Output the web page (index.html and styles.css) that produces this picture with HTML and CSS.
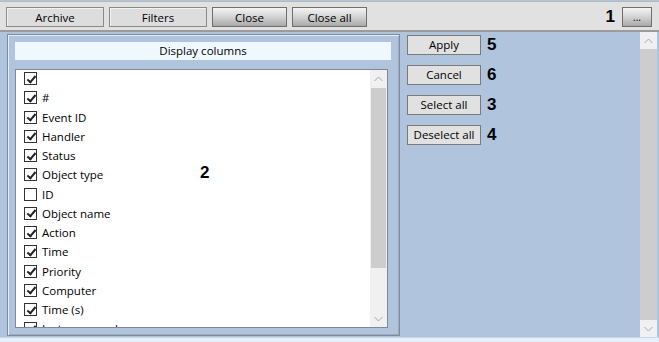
FILE: index.html
```html
<!DOCTYPE html>
<html>
<head>
<meta charset="utf-8">
<link rel="stylesheet" href="styles.css">
</head>
<body>
<div class="app">
  <div class="toolbar">
    <button class="tbtn flat w98">Archive</button>
    <button class="tbtn flat w98">Filters</button>
    <button class="tbtn grad w75">Close</button>
    <button class="tbtn grad w75">Close all</button>
    <span class="spacer"></span>
    <span class="num">1</span>
    <button class="tbtn grad dots">...</button>
  </div>
  <div class="main">
    <div class="content">
      <div class="panel">
        <div class="header">Display columns</div>
        <div class="listbox">
          <div class="items">
            <div class="item"><span class="cb on"></span><span class="lbl"></span></div>
            <div class="item"><span class="cb on"></span><span class="lbl">#</span></div>
            <div class="item"><span class="cb on"></span><span class="lbl">Event ID</span></div>
            <div class="item"><span class="cb on"></span><span class="lbl">Handler</span></div>
            <div class="item"><span class="cb on"></span><span class="lbl">Status</span></div>
            <div class="item"><span class="cb on"></span><span class="lbl">Object type</span></div>
            <div class="item"><span class="cb"></span><span class="lbl">ID</span></div>
            <div class="item"><span class="cb on"></span><span class="lbl">Object name</span></div>
            <div class="item"><span class="cb on"></span><span class="lbl">Action</span></div>
            <div class="item"><span class="cb on"></span><span class="lbl">Time</span></div>
            <div class="item"><span class="cb on"></span><span class="lbl">Priority</span></div>
            <div class="item"><span class="cb on"></span><span class="lbl">Computer</span></div>
            <div class="item"><span class="cb on"></span><span class="lbl">Time (s)</span></div>
            <div class="item"><span class="cb on"></span><span class="lbl">Instance number</span></div>
          </div>
          <div class="sbar">
            <div class="sarrow"><svg width="9" height="6" viewBox="0 0 9 6"><polyline points="0.5,5 4.5,1 8.5,5" fill="none" stroke="#a6a6a6" stroke-width="1"/></svg></div>
            <div class="sthumb"></div>
            <div class="sfill"></div>
            <div class="sarrow"><svg width="9" height="6" viewBox="0 0 9 6"><polyline points="0.5,1 4.5,5 8.5,1" fill="none" stroke="#a6a6a6" stroke-width="1"/></svg></div>
          </div>
          <span class="num label2">2</span>
        </div>
      </div>
      <div class="actions">
        <div class="arow"><button class="abtn">Apply</button><span class="num">5</span></div>
        <div class="arow"><button class="abtn">Cancel</button><span class="num">6</span></div>
        <div class="arow"><button class="abtn">Select all</button><span class="num">3</span></div>
        <div class="arow"><button class="abtn">Deselect all</button><span class="num">4</span></div>
      </div>
    </div>
    <div class="vscroll">
      <div class="sarrow top"><svg width="9" height="6" viewBox="0 0 9 6"><polyline points="0.5,5 4.5,1 8.5,5" fill="none" stroke="#a6a6a6" stroke-width="1"/></svg></div>
      <div class="vthumb"></div>
      <div class="sarrow bot"><svg width="9" height="6" viewBox="0 0 9 6"><polyline points="0.5,1 4.5,5 8.5,1" fill="none" stroke="#a6a6a6" stroke-width="1"/></svg></div>
    </div>
  </div>
  <div class="bottom"></div>
</div>
</body>
</html>
```
FILE: styles.css
```css
* { box-sizing: border-box; }
html, body { margin: 0; padding: 0; }
body {
  width: 659px;
  height: 342px;
  overflow: hidden;
  font-family: "Open Sans", "Noto Sans", sans-serif;
  font-size: 11.5px;
  color: #000;
  background: #b0c4de;
}
.app { width: 659px; height: 342px; display: flex; flex-direction: column; }

.toolbar {
  height: 31px;
  flex: none;
  background: #e1e1e1;
  border-top: 1px solid #b9b9b9;
  margin-top: 1px;
  border-bottom: 2px solid #9b9b9b;
  display: flex;
  align-items: center;
  padding: 2px 7px 0 6px;
  gap: 5px;
}
.tbtn {
  height: 20px;
  font-family: inherit;
  font-size: 11.5px;
  color: #000;
  padding: 0;
  line-height: 17px;
  margin: 0;
}
.flat {
  background: #dddddd;
  border: 1px solid #8a8a8a;
  box-shadow: inset 1px 1px 0 #f2f2f2;
}
.grad {
  background: linear-gradient(#f4f4f4 0%, #d6d6d6 45%, #a9a9a9 100%);
  border: 1px solid #6f6f6f;
}
.w98 { width: 98px; }
.w75 { width: 75px; margin-left: 0; }
.spacer { flex: 1; }
.dots { width: 30px; font-size: 10px; line-height: 16px; margin-left: 2px; }

.num {
  font-family: "Liberation Sans", Arial, sans-serif;
  font-weight: bold;
  font-size: 17px;
  line-height: 20px;
}

.main {
  flex: 1;
  display: flex;
  min-height: 0;
}
.content {
  flex: 1;
  display: flex;
  padding: 2px 0 0 7px;
  gap: 7px;
}
.panel {
  width: 393px;
  height: 302px;
  border: 1px solid #7e8b9c;
  box-shadow: inset 1px 1px 0 #e6edf6, inset -1px -1px 0 #9eaabb;
  padding: 7px 8px 7px 7px;
  display: flex;
  flex-direction: column;
  gap: 9px;
}
.header {
  height: 18px;
  background: #f0f8ff;
  text-align: center;
  line-height: 17px;
  flex: none;
}
.listbox {
  position: relative;
  width: 373px;
  height: 260px;
  background: #fff;
  border: 1px solid #828790;
  display: flex;
  overflow: hidden;
}
.items {
  flex: 1;
  padding: 0 0 0 8px;
  margin-top: -1px;
}
.item {
  height: 19.25px;
  display: flex;
  align-items: center;
  gap: 5px;
}
.cb {
  width: 13px;
  height: 13px;
  border: 1px solid #333;
  background: #fff;
  flex: none;
  position: relative;
}
.cb.on::after {
  content: "";
  position: absolute;
  left: 3.5px;
  top: 0.5px;
  width: 3px;
  height: 7px;
  border-right: 2px solid #222;
  border-bottom: 2px solid #222;
  transform: rotate(40deg);
}
.lbl { white-space: nowrap; }
.label2 {
  position: absolute;
  left: 184px;
  top: 93px;
}
.sbar {
  width: 17px;
  flex: none;
  background: #f0f0f0;
  display: flex;
  flex-direction: column;
}
.sarrow {
  height: 17px;
  flex: none;
  display: flex;
  align-items: center;
  justify-content: center;
}
.sthumb {
  height: 180px;
  background: #cdcdcd;
  margin: 1px 1px 0 1px;
  flex: none;
}
.sfill { flex: 1; }

.actions {
  display: flex;
  flex-direction: column;
  gap: 10px;
  padding-top: 1px;
}
.arow {
  display: flex;
  align-items: center;
  gap: 6px;
  height: 20px;
}
.abtn {
  width: 74px;
  height: 20px;
  background: #e1e1e1;
  border: 1px solid #7a7a7a;
  font-family: inherit;
  font-size: 11.5px;
  line-height: 16px;
  padding: 0;
  color: #000;
}

.vscroll {
  width: 17px;
  flex: none;
  margin-right: 2px;
  display: flex;
  flex-direction: column;
  background: #f0f0f0;
}
.vthumb { flex: 1; background: #cdcdcd; margin: 0 0 0 0; }
.bottom {
  height: 5px;
  flex: none;
  background: #e8f1fa;
  border-top: 1px solid #c8d6e6;
}
```
